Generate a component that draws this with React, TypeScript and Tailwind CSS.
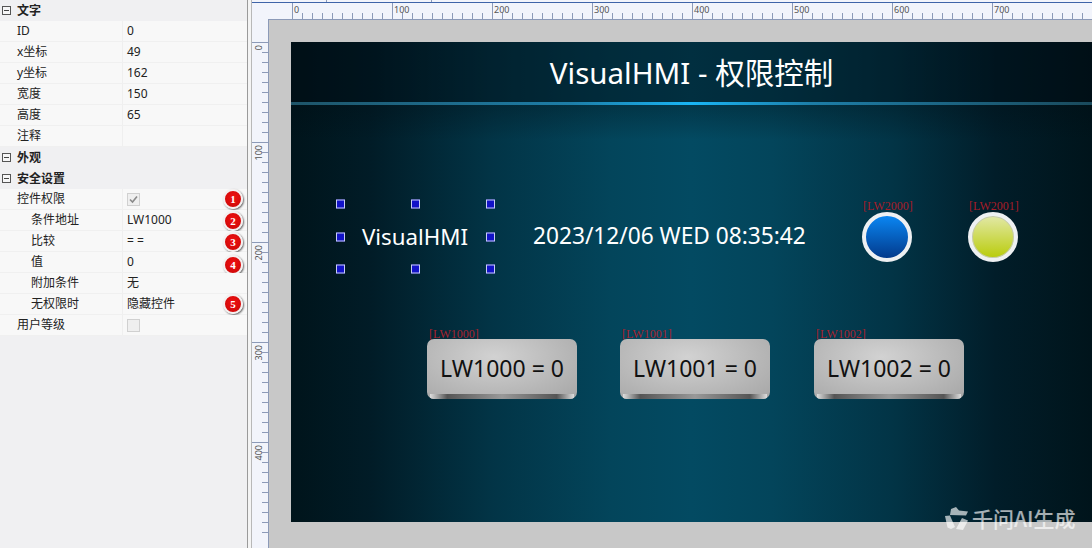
const sans = "font-['Noto_Sans','Noto_Sans_CJK_SC',sans-serif]";

type PropRow = { label: string; value?: string; indent?: boolean; check?: "on" | "off"; badge?: number; badgeOffset?: number };

const textRows: PropRow[] = [
  { label: "ID", value: "0" },
  { label: "x坐标", value: "49" },
  { label: "y坐标", value: "162" },
  { label: "宽度", value: "150" },
  { label: "高度", value: "65" },
  { label: "注释" },
];

const securityRows: PropRow[] = [
  { label: "条件地址", value: "LW1000", indent: true, badge: 2, badgeOffset: 1 },
  { label: "比较", value: "= =", indent: true, badge: 3, badgeOffset: 1 },
  { label: "值", value: "0", indent: true, badge: 4, badgeOffset: 3 },
  { label: "附加条件", value: "无", indent: true },
  { label: "无权限时", value: "隐藏控件", indent: true, badge: 5 },
];

const handles = [
  "left-0 top-0",
  "left-1/2 top-0",
  "left-full top-0",
  "left-0 top-1/2",
  "left-full top-1/2",
  "left-0 top-full",
  "left-1/2 top-full",
  "left-full top-full",
];

function Collapse() {
  return (
    <span className="flex h-[9px] w-[9px] items-center justify-center border border-[#555] bg-white/40">
      <span className="h-px w-[5px] bg-[#444]" />
    </span>
  );
}

function Badge({ n, offset = 0 }: { n: number; offset?: number }) {
  return (
    <span
      className="absolute right-[4px] flex h-[20px] w-[20px] items-center justify-center rounded-full border-2 border-[#f4f0f0] bg-[radial-gradient(circle_at_50%_40%,#f01010,#c80808)] font-['Liberation_Serif',serif] text-[11px] font-bold leading-none text-white shadow-[1px_1px_2px_rgba(0,0,0,0.6)]"
      style={{ top: offset }}
    >
      {n}
    </span>
  );
}

function Check({ checked }: { checked: boolean }) {
  return (
    <span className="flex h-[13px] w-[13px] items-center justify-center border border-[#d0d0d0] bg-[#efefef]">
      {checked && (
        <svg width="9" height="9" viewBox="0 0 9 9" fill="none">
          <path d="M1 4.5L3.5 7L8 1.5" stroke="#8a8a8a" strokeWidth="1.6" />
        </svg>
      )}
    </span>
  );
}

function Row({ row }: { row: PropRow }) {
  return (
    <div className="relative flex h-[21px] border-b border-[#f0f0f0] bg-[#f8f8f8] pl-[14px] text-[12px] leading-[20px] text-[#222]">
      <div className={`w-[109px] shrink-0 border-r border-[#efefef] ${row.indent ? "pl-[17px]" : "pl-[3px]"}`}>{row.label}</div>
      <div className="flex flex-1 items-center pl-[4px]">
        {row.check ? <Check checked={row.check === "on"} /> : row.value}
      </div>
      {row.badge && <Badge n={row.badge} offset={row.badgeOffset} />}
    </div>
  );
}

function Section({ title }: { title: string }) {
  return (
    <div className="flex h-[21px] items-center gap-[6px] pl-[2px] text-[12px] font-bold text-[#222]">
      <Collapse />
      {title}
    </div>
  );
}

function PropertyPanel() {
  return (
    <aside className="relative w-[247px] shrink-0 bg-[#f0f0f2]">
      <Section title="文字" />
      {textRows.map((r) => (
        <Row key={r.label} row={r} />
      ))}
      <Section title="外观" />
      <Section title="安全设置" />
      <div className="relative">
        <span className="absolute left-[2px] top-[6px]">
          <Collapse />
        </span>
        <Row row={{ label: "控件权限", check: "on", badge: 1 }} />
      </div>
      {securityRows.map((r) => (
        <Row key={r.label} row={r} />
      ))}
      <Row row={{ label: "用户等级", check: "off" }} />
    </aside>
  );
}

function TopRuler() {
  const ticks = Array.from({ length: 80 }, (_, i) => i * 10);
  return (
    <svg className="block h-[20px] w-[840px] shrink-0" viewBox="0 0 840 20">
      <rect width="840" height="20" fill="#f2f4fb" />
      <rect width="840" height="1" y="2" fill="#3f64a8" />
      <rect x="16" y="19" width="824" height="1" fill="#8c9ab8" />
      <rect x="74" y="0" width="1" height="2" fill="#8c9ab8" />
      <rect x="179" y="0" width="1" height="2" fill="#8c9ab8" />
      {ticks.map((t) => {
        const x = 40 + t;
        const major = t % 100 === 0;
        return (
          <g key={t}>
            <rect x={x} y={major ? 3 : 13} width="1" height={major ? 16 : 6} fill="#8c9ab8" />
            {major && (
              <text x={x + 2} y="13" fontSize="9" fill="#555" fontFamily="Noto Sans">
                {t}
              </text>
            )}
          </g>
        );
      })}
    </svg>
  );
}

function LeftRuler() {
  const ticks = Array.from({ length: 50 }, (_, i) => i * 10);
  return (
    <svg className="block h-[528px] w-[17px] shrink-0" viewBox="0 0 17 528">
      <rect width="17" height="528" fill="#f2f4fb" />
      <rect x="16" width="1" height="528" fill="#8c9ab8" />
      {ticks.map((t) => {
        const y = 22 + t;
        const major = t % 100 === 0;
        return (
          <g key={t}>
            <rect x={major ? 0 : 10} y={y} width={major ? 16 : 6} height="1" fill="#8c9ab8" />
            {major && (
              <text transform={`translate(10 ${y + 3}) rotate(-90)`} fontSize="9" fill="#555" fontFamily="Noto Sans" textAnchor="end">
                {t}
              </text>
            )}
          </g>
        );
      })}
    </svg>
  );
}

function Lamp({ tag, yellow }: { tag: string; yellow?: boolean }) {
  return (
    <div
      className={`relative h-[50px] w-[50px] shrink-0 rounded-full border-[4px] border-[#eef0f2] ${
        yellow ? "bg-[linear-gradient(#e2e8a6,#b9cc0a)] shadow-[inset_0_0_0_1px_#c4c8b0]" : "bg-[linear-gradient(#0a86f2,#023a8c)]"
      }`}
    >
      <span className="absolute -left-[3px] -top-[16px] w-[50px] text-center font-['Liberation_Serif',serif] text-[12px] leading-[13px] text-[#a81c28]">
        {tag}
      </span>
    </div>
  );
}

function PlcButton({ tag, className = "" }: { tag: string; className?: string }) {
  return (
    <div className={`relative w-[150px] shrink-0 ${className}`}>
      <span className="absolute left-[2px] -top-[11px] font-['Liberation_Serif',serif] text-[12px] leading-[13px] text-[#a8222e]">[{tag}]</span>
      <div className="relative flex h-[60px] items-center justify-center overflow-hidden rounded-[7px] bg-[radial-gradient(ellipse_at_45%_30%,#d2d2d2,#a6a6a6)] pb-[2px] text-[23px] text-[#111]">
        {tag} = 0
        <span className="absolute inset-x-[3px] bottom-0 h-[5px] bg-[linear-gradient(90deg,#ddd,#555_12%,#999_50%,#555_88%,#ddd)]" />
      </div>
    </div>
  );
}

function Canvas() {
  return (
    <div className={`h-[480px] w-[801px] shrink-0 overflow-hidden bg-[linear-gradient(90deg,#00141b_0%,#011c27_10%,#023446_25%,#03455b_40%,#034a62_50%,#03455b_60%,#023446_75%,#011d29_88%,#00141b_100%)] ${sans} text-white`}>
      <div className="flex h-[60px] items-center justify-center bg-[rgba(0,10,16,0.42)] pt-[2px] text-[29.5px]">VisualHMI - 权限控制</div>
      <div className="h-[3px] bg-[linear-gradient(90deg,#1e5468,#1d7ea8_35%,#19b5f5_50%,#1d7ea8_65%,#1a4a5c)]" />

      <div className="h-[99px] bg-[linear-gradient(rgba(0,12,18,0.3),transparent_35%)]" />
      <div className="flex h-[65px] items-center pl-[49px]">
        <div className="relative flex h-[65px] w-[150px] shrink-0 items-center justify-center text-[22.3px]">
          {handles.map((h) => (
            <span key={h} className={`absolute h-[9px] w-[9px] -translate-x-[4px] -translate-y-1/2 border border-[#c9cdf5] bg-[#1212c8] ${h}`} />
          ))}
          VisualHMI
        </div>
        <span className="ml-[43px] w-[329px] shrink-0 whitespace-nowrap text-[22.7px]">2023/12/06 WED 08:35:42</span>
        <Lamp tag="[LW2000]" />
        <span className="w-[56px] shrink-0" />
        <Lamp tag="[LW2001]" yellow />
      </div>
      <div className="mt-[70px] flex gap-[43px] pl-[136px]">
        <PlcButton tag="LW1000" />
        <PlcButton tag="LW1001" />
        <PlcButton tag="LW1002" className="ml-px" />
      </div>
    </div>
  );
}

function Watermark() {
  return (
    <div className="absolute left-[945px] top-[505px] flex items-center gap-[3px] font-['Noto_Sans_CJK_SC',sans-serif] text-[21px] font-medium leading-[26px] text-white/65">
      <svg width="24" height="25" viewBox="0 0 24 25" fill="currentColor" className="shrink-0">
        <path d="M6 3L11 1L14 4.5L23 5.5L21 9.5L5 9Z" />
        <path d="M0 10L5 9.5L10 21L6 23L2.5 21.5Z" />
        <path d="M11 23L17 12L23 14.5L18 24Z" />
      </svg>
      千问AI生成
    </div>
  );
}

export default function App() {
  return (
    <div className="relative flex h-[548px] w-[1092px] overflow-hidden bg-[#f0f0f2] font-['Noto_Sans','Noto_Sans_CJK_SC',sans-serif]">
      <PropertyPanel />
      <div className="flex w-[5px] shrink-0 justify-between bg-[#f4f4f4]">
        <span className="w-px bg-[#9a9a9a]" />
        <span className="w-px bg-[#b8b8b8]" />
      </div>
      <main className="flex min-w-0 flex-1 flex-col">
        <TopRuler />
        <div className="flex">
          <LeftRuler />
          <div className="h-[528px] flex-1 bg-[#c8c8c8] pl-[22px] pt-[22px]">
            <Canvas />
          </div>
        </div>
      </main>
      <Watermark />
    </div>
  );
}
